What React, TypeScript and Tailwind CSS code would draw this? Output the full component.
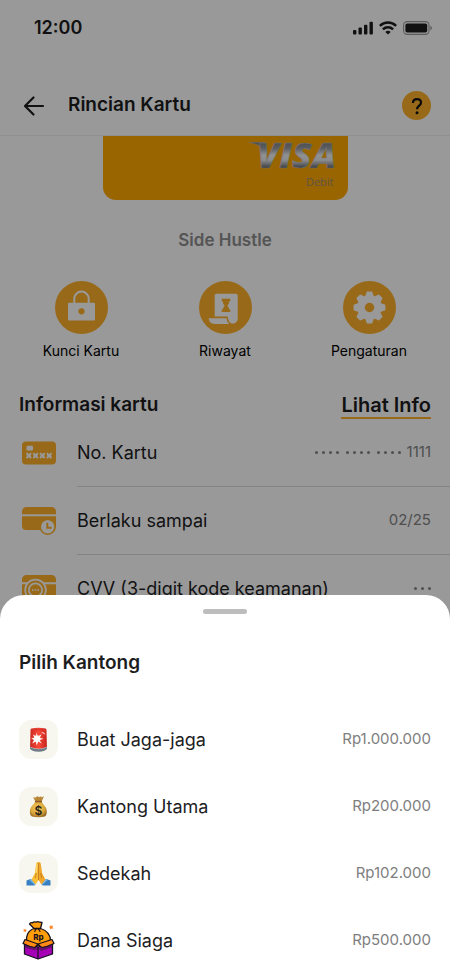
import type { ReactNode } from "react";

const AMBER = "#fdb02b";

function StatusIcons() {
  return (
    <div className="flex items-center gap-1.5 text-[#1d1d1f]">
      <svg width="20" height="14" viewBox="0 0 20 14" fill="currentColor">
        <rect x="0" y="9" width="3.4" height="4.5" rx="1" />
        <rect x="5.5" y="6.6" width="3.4" height="6.9" rx="1" />
        <rect x="11" y="3.8" width="3.4" height="9.7" rx="1" />
        <rect x="16.5" y="0.8" width="3.4" height="12.7" rx="1" />
      </svg>
      <svg width="18" height="14" viewBox="0 0 18 14" fill="none" stroke="currentColor" strokeWidth="2.5">
        <path d="M0.9 4.9a11.6 11.6 0 0 1 16.2 0" />
        <path d="M3.9 8.3a7.3 7.3 0 0 1 10.2 0" />
        <path d="M6.3 11a4 4 0 0 1 5.4 0L9 13.6z" fill="currentColor" stroke="none" />
      </svg>
      <svg width="30" height="14" viewBox="0 0 30 14" fill="none">
        <rect x="0.6" y="0.6" width="25.4" height="12.8" rx="3.6" stroke="currentColor" strokeOpacity="0.45" strokeWidth="1.1" />
        <rect x="2.4" y="2.4" width="21.8" height="9.2" rx="1.8" fill="currentColor" />
        <path d="M27.3 4.7c1 .4 1.6 1.3 1.6 2.3s-.6 1.9-1.6 2.3z" fill="currentColor" fillOpacity="0.45" />
      </svg>
    </div>
  );
}

function LockIcon() {
  return (
    <svg width="53" height="53" viewBox="0 0 53 53" fill="none">
      <circle cx="26.5" cy="26.5" r="26.5" fill={AMBER} />
      <path d="M19.3 23v-5.2a7.2 7.2 0 0 1 14.4 0V23" stroke="#fff" strokeWidth="2" />
      <rect x="13" y="21.7" width="27" height="17.8" rx="1.2" fill="#fff" />
      <circle cx="26.5" cy="30.3" r="3.1" fill={AMBER} />
    </svg>
  );
}

function HistoryIcon() {
  return (
    <svg width="53" height="53" viewBox="0 0 53 53">
      <circle cx="26.5" cy="26.5" r="26.5" fill={AMBER} />
      <path d="M17.5 12.7h19.4q1.8 0 1.8 1.8V38a5 5 0 0 1-5 4.7q-4.6-.4-4.9-7.2H15.7v-21q0-1.8 1.8-1.8z" fill="#fff" />
      <path d="M9.5 37.3h18q.2 3.5 2.500 5.700H15.500q-5 0-6-5.700z" fill="#fff" />
      <path d="M22.7 17.7h8.6v2.6h-1q0 2.6-2 4.5 2 1.9 2 3.7h1v2.6h-8.6v-2.6h1q0-1.8 2-3.700-2-1.900-2-4.500h-1z" fill={AMBER} />
    </svg>
  );
}

function GearIcon() {
  return (
    <svg width="53" height="53" viewBox="0 0 53 53">
      <circle cx="26.5" cy="26.5" r="26.5" fill={AMBER} />
      <g fill="#fff">
        <circle cx="26.5" cy="26.5" r="12.2" />
        {[0, 45, 90, 135, 180, 225, 270, 315].map((angle) => (
          <path key={angle} d="M22.1 15.5l1.500-4.200q.1-.7.700-.7h4.400q.6 0 .7.700l1.500 4.200z" transform={`rotate(${angle} 26.5 26.5)`} />
        ))}
      </g>
      <circle cx="26.5" cy="26.5" r="4.7" fill={AMBER} />
    </svg>
  );
}

function CardNumberIcon() {
  return (
    <svg width="34" height="28" viewBox="0 0 34 28">
      <rect y="2.5" width="34" height="23" rx="4" fill={AMBER} />
      <rect x="4.5" y="6.7" width="6.5" height="4.7" rx="1.2" fill="#fff" />
      <g stroke="#fff" strokeWidth="1.9">
        {[4.5, 11.3, 18.1, 24.9].map((x) => (
          <path key={x} d={`M${x} 14.2l4.600 5m0-5l-4.600 5M${x + 0.3} 16.700h4`} />
        ))}
      </g>
    </svg>
  );
}

function ExpiryIcon() {
  return (
    <svg width="34" height="28" viewBox="0 0 34 28">
      <path d="M0 7.2V4.5A4.5 4.5 0 0 1 4.5 0h25A4.5 4.5 0 0 1 34 4.5v2.7z" fill={AMBER} />
      <path d="M0 9.3h34V19a4 4 0 0 1-4 4H4a4 4 0 0 1-4-4z" fill={AMBER} />
      <circle cx="25.7" cy="19.8" r="7.4" fill="#fff" stroke={AMBER} strokeWidth="1.6" />
      <circle cx="25.7" cy="19.8" r="6.3" fill="#fff" />
      <path d="M25.300 15.800v4.900h4.200" fill="none" stroke={AMBER} strokeWidth="1.9" />
    </svg>
  );
}

function CvvIcon() {
  return (
    <svg width="34" height="28" viewBox="0 0 34 28">
      <path d="M0 7.2V4.5A4.5 4.5 0 0 1 4.5 0h25A4.5 4.5 0 0 1 34 4.5v2.7z" fill={AMBER} />
      <path d="M0 9.3h34V19a4 4 0 0 1-4 4H4a4 4 0 0 1-4-4z" fill={AMBER} />
      <circle cx="13.5" cy="15" r="11.2" fill="#fff" />
      <circle cx="13.5" cy="15" r="8.5" fill="#fff" stroke={AMBER} strokeWidth="2" />
      <circle cx="13.5" cy="15" r="5.8" fill={AMBER} />
      <path d="M10 15h1.6m1.1 0h1.6m1.1 0H17" stroke="#fff" strokeWidth="1.5" />
    </svg>
  );
}

function VisaLogo() {
  return (
    <svg width="88" height="30" viewBox="0 0 88 30" className="overflow-visible" role="img" aria-label="Visa">
      <defs>
        <linearGradient id="silver" gradientUnits="userSpaceOnUse" x1="0" y1="2" x2="0" y2="28">
          <stop offset="0" stopColor="#7c8086" />
          <stop offset="0.25" stopColor="#9a9da3" />
          <stop offset="0.5" stopColor="#f0f1f4" />
          <stop offset="0.7" stopColor="#e8e9ec" />
          <stop offset="1" stopColor="#62666c" />
        </linearGradient>
      </defs>
      <path d="M1 2.3h13.5q2.7 0 3.3 2.2l1.5 9.5Q14.5 5 1 2.3z" fill="url(#silver)" stroke="#c4c6c9" strokeWidth="0.4" />
      <text x="9" y="28" fontFamily="Open Sans, sans-serif" fontStyle="italic" fontWeight="800" fontSize="36" fill="url(#silver)" stroke="#c4c6c9" strokeWidth="0.5">
        VISA
      </text>
    </svg>
  );
}

function SirenIcon() {
  return (
    <svg width="39" height="39" viewBox="0 0 39 39">
      <defs>
        <linearGradient id="siren" x1="0" y1="0" x2="1" y2="0">
          <stop offset="0" stopColor="#c92a22" />
          <stop offset="0.5" stopColor="#fb4a3a" />
          <stop offset="1" stopColor="#c5221c" />
        </linearGradient>
      </defs>
      <path d="M11 26.5h17v1.8q-1 3.4-8.5 3.4T11 28.3z" fill="#6f7c86" />
      <path d="M11.5 26q8 3.5 16 0v1.5q-8 3.5-16 0z" fill="#c8d2d8" />
      <path d="M12.5 8.6q7-1.6 14 0 1 .3 1 1.500l.4 16.600q-8.400 4-16.800 0l.4-16.600q0-1.200 1-1.500z" fill="url(#siren)" />
      <path d="M12.3 9.5q7.2-1.6 14.4 0l.2 1.500q-7.400-1.500-14.800 0z" fill="#d9362c" />
      <path d="M22 12.500q3.500-1.500 4.500 2.500l-2-1.200z" fill="#ffb8aa" />
      <circle cx="18" cy="18.5" r="3.5" fill="#ff9b86" />
      <path d="M17.500 12.500l1.300 4 3.800-2.200-2 3.600 4 .8-4 1.400 2 3.500-3.400-2.200-1.500 4-.9-4-3.700 2 2-3.500-3-1.500 3.400-.6-1.600-3.400 3.200 1.800z" fill="#fff" />
    </svg>
  );
}

function MoneyBagIcon() {
  return (
    <svg width="39" height="39" viewBox="0 0 39 39">
      <defs>
        <radialGradient id="bag" cx="0.45" cy="0.4" r="0.65">
          <stop offset="0" stopColor="#f5cf62" />
          <stop offset="0.65" stopColor="#d9a438" />
          <stop offset="1" stopColor="#916322" />
        </radialGradient>
      </defs>
      <path d="M14 10q2 1 3 .2 1.500-1.800 3 0 1.800-1.500 2.800 0l2.200-1-2.500 5.500h-6z" fill="#b88737" />
      <path d="M16.300 14.500h6.200q1.500 3 4 5.500c2.300 4 1.300 8.500-.7 9.500q-6.300 1.500-12.800 0c-2.500-1.200-3-6.500-.5-10q2.600-2.500 3.800-5z" fill="url(#bag)" />
      <path d="M16 14.600h7" stroke="#8b5c25" strokeWidth="1.5" />
      <text x="19.5" y="28" textAnchor="middle" fontFamily="Inter, sans-serif" fontWeight="600" fontSize="12" fill="#252019">
        $
      </text>
    </svg>
  );
}

function PrayIcon() {
  return (
    <svg width="39" height="39" viewBox="0 0 39 39">
      <path d="M7.5 26.5l4-1.500 5 5-1 1.500h-8z" fill="#397fc2" />
      <path d="M31.5 26.5l-4-1.500-5 5 1 1.500h8z" fill="#397fc2" />
      <path d="M10 25.8l3-.8 4 4.500-1.200 1.500z" fill="#75b3e5" />
      <path d="M29 25.8l-3-.8-4 4.500 1.200 1.500z" fill="#75b3e5" />
      <path d="M19.5 8q-2-.4-2.300 1.800l-1.400 9.700-3.300 6 4 5 3-4.500z" fill="#f9bd36" />
      <path d="M19.5 8q2-.4 2.300 1.800l1.400 9.700 3.300 6-4 5-3-4.500z" fill="#f0a72c" />
      <path d="M19.5 9v17M17.300 19l-1 5M21.700 19l1 5" stroke="#bd741b" strokeWidth="0.8" />
      <path d="M18.200 10l-1 9" stroke="#ffdf80" strokeWidth="0.9" />
    </svg>
  );
}

function BoxIcon() {
  return (
    <svg width="39" height="39" viewBox="0 0 39 39" strokeLinejoin="round" strokeLinecap="round">
      <path d="M5.5 21L19 26l14.500-5v12L19 38 5.500 33z" fill="#a500b5" stroke="#17111f" strokeWidth="1.3" />
      <path d="M6 23.5l10 3.500 3-1 3 1 11-3.500v3L22 30l-3-2.500-2.500 2L6 26.500z" fill="#65136f" />
      <path d="M19 26v11.5" stroke="#17111f" strokeWidth="1.2" />
      <path d="M15 7.5C8.500 9.500 7 16 7.500 20L19 24.500 31.500 20C31.500 14 28 9.500 21.500 7.500z" fill="#ff9d0a" stroke="#17111f" strokeWidth="1.3" />
      <path d="M15 7.500L10.500 3q1-2 3-1.200 1.500-1.600 3.500-.6 2-1 3.500 0l2.500.3-1.500 6z" fill="#ff9d0a" stroke="#17111f" strokeWidth="1.3" />
      <path d="M15 7.500h6.500M17 8l-1.300 2.500M19.500 8l1.500 2.500" stroke="#17111f" strokeWidth="1.1" fill="none" />
      <path d="M6 18.500l13 4.500-3 3.500q-6-.8-12-4z" fill="#ff8a14" stroke="#17111f" strokeWidth="1.2" />
      <path d="M33 18.500L19 23l3.500 3.500q6-.8 12.500-4z" fill="#ff8a14" stroke="#17111f" strokeWidth="1.2" />
      <text x="19.5" y="18.5" textAnchor="middle" fontFamily="Inter, sans-serif" fontWeight="800" fontSize="8" fill="#17111f">
        Rp
      </text>
      <path d="M31 4l1.200 1L34 4.500 33.500 6.300l1 1.300-1.800-.2-1.500 1-.1-1.600-1.500-1 1.700-.4z" fill="#ff8324" />
      <path d="M6 7.500l.6 1.200 1.300.3-1 1 .1 1.300-1.200-.7-1.300.4.4-1.300-.8-1.200h1.400z" fill="#ff8324" />
    </svg>
  );
}

const actions = [
  { label: "Kunci Kartu", icon: <LockIcon /> },
  { label: "Riwayat", icon: <HistoryIcon /> },
  { label: "Pengaturan", icon: <GearIcon /> },
];

const dots = (groups: number[]) => (
  <span className="flex gap-[7px]">
    {groups.map((count, i) => (
      <span key={i} className="flex gap-1">
        {Array.from({ length: count }, (_, n) => (
          <span key={n} className="size-[3px] rounded-full bg-current" />
        ))}
      </span>
    ))}
  </span>
);

const details: { label: string; icon: ReactNode; value: ReactNode }[] = [
  { label: "No. Kartu", icon: <CardNumberIcon />, value: <>{dots([4, 4, 4])}1111</> },
  { label: "Berlaku sampai", icon: <ExpiryIcon />, value: "02/25" },
  { label: "CVV (3-digit kode keamanan)", icon: <CvvIcon />, value: dots([3]) },
];

const pockets = [
  { name: "Buat Jaga-jaga", amount: "Rp1.000.000", icon: <SirenIcon />, tile: true },
  { name: "Kantong Utama", amount: "Rp200.000", icon: <MoneyBagIcon />, tile: true },
  { name: "Sedekah", amount: "Rp102.000", icon: <PrayIcon />, tile: true },
  { name: "Dana Siaga", amount: "Rp500.000", icon: <BoxIcon />, tile: false },
];

export default function App() {
  return (
    <div className="relative h-screen overflow-hidden bg-white font-['Inter',sans-serif] text-[#1d1d1f]">
      <header className="border-b border-[#f0f0f0]">
        <div className="flex h-14 items-center justify-between pr-[17px] pl-[34px]">
          <span className="text-lg font-semibold">12:00</span>
          <StatusIcons />
        </div>
        <div className="mt-5 flex h-[59px] items-center px-[19px]">
          <button aria-label="Kembali" className="mr-5 flex size-[29px] items-center justify-center">
            <svg width="22" height="22" viewBox="0 0 22 22" fill="none" stroke="currentColor" strokeWidth="2.2" strokeLinecap="round" strokeLinejoin="round">
              <path d="M20 11H2.5M10.5 2.5L2 11l8.5 8.500" />
            </svg>
          </button>
          <h1 className="flex-1 text-[19px] font-semibold">Rincian Kartu</h1>
          <button aria-label="Bantuan" className="flex size-[29px] items-center justify-center rounded-full bg-[#fdb02b]">
            <svg width="12" height="18" viewBox="0 0 12 18" fill="none" stroke="#111" strokeWidth="2.2">
              <path d="M2 6C2 3.500 3.500 2.200 6 2.200s4 1.300 4 3.500c0 2.900-4 3.100-4 6.600" />
              <circle cx="6" cy="15.7" r="1.5" fill="#111" stroke="none" />
            </svg>
          </button>
        </div>
      </header>

      <main>
        <div className="mx-auto flex h-16 w-[245px] flex-col items-end rounded-b-[13px] bg-[#ffa800] px-3 pt-1">
          <VisaLogo />
          <span className="pr-0.5 font-['Open_Sans',sans-serif] text-[11px] leading-6 text-[#a08c74]">Debit</span>
        </div>
        <p className="mt-7 text-center text-[17px] leading-[25px] font-semibold text-[#8e8e8e]">Side Hustle</p>

        <div className="mt-7 grid grid-cols-3 px-[9px]">
          {actions.map((action) => (
            <button key={action.label} className="flex flex-col items-center gap-[7px] text-sm leading-5 text-black">
              {action.icon}
              {action.label}
            </button>
          ))}
        </div>

        <div className="mt-8 flex h-[26px] items-start justify-between px-[19px]">
          <h2 className="text-[19px] leading-6 font-semibold">Informasi kartu</h2>
          <a href="#info" className="border-b-2 border-[#fdb02b] text-xl leading-6 font-semibold">
            Lihat Info
          </a>
        </div>

        <ul>
          {details.map((item) => (
            <li key={item.label} className="flex items-center pl-[22px]">
              {item.icon}
              <div className="ml-[21px] flex h-[68px] flex-1 items-center justify-between border-b border-[#dadada] pr-[19px]">
                <span className="text-[18px]">{item.label}</span>
                <span className="flex items-center gap-1.5 text-[15px] text-[#848484]">{item.value}</span>
              </div>
            </li>
          ))}
        </ul>
      </main>

      <div className="absolute inset-0 bg-black/40" />

      <section className="absolute inset-x-0 bottom-0 rounded-t-3xl bg-white px-[19px] pb-px">
        <div className="mx-auto mt-3.5 h-[5px] w-11 rounded-full bg-[#bdbdbd]" />
        <h2 className="mt-[37px] text-[19px] leading-6 font-semibold">Pilih Kantong</h2>
        <ul className="mt-[31px]">
          {pockets.map((pocket) => (
            <li key={pocket.name}>
              <button className="flex h-[67px] w-full items-center text-left">
                <span className={pocket.tile ? "rounded-xl bg-[#f7f7ef]" : ""}>{pocket.icon}</span>
                <span className="ml-[19px] flex-1 text-[18px]">{pocket.name}</span>
                <span className="text-[15px] text-[#7e7e7e]">{pocket.amount}</span>
              </button>
            </li>
          ))}
        </ul>
      </section>
    </div>
  );
}
